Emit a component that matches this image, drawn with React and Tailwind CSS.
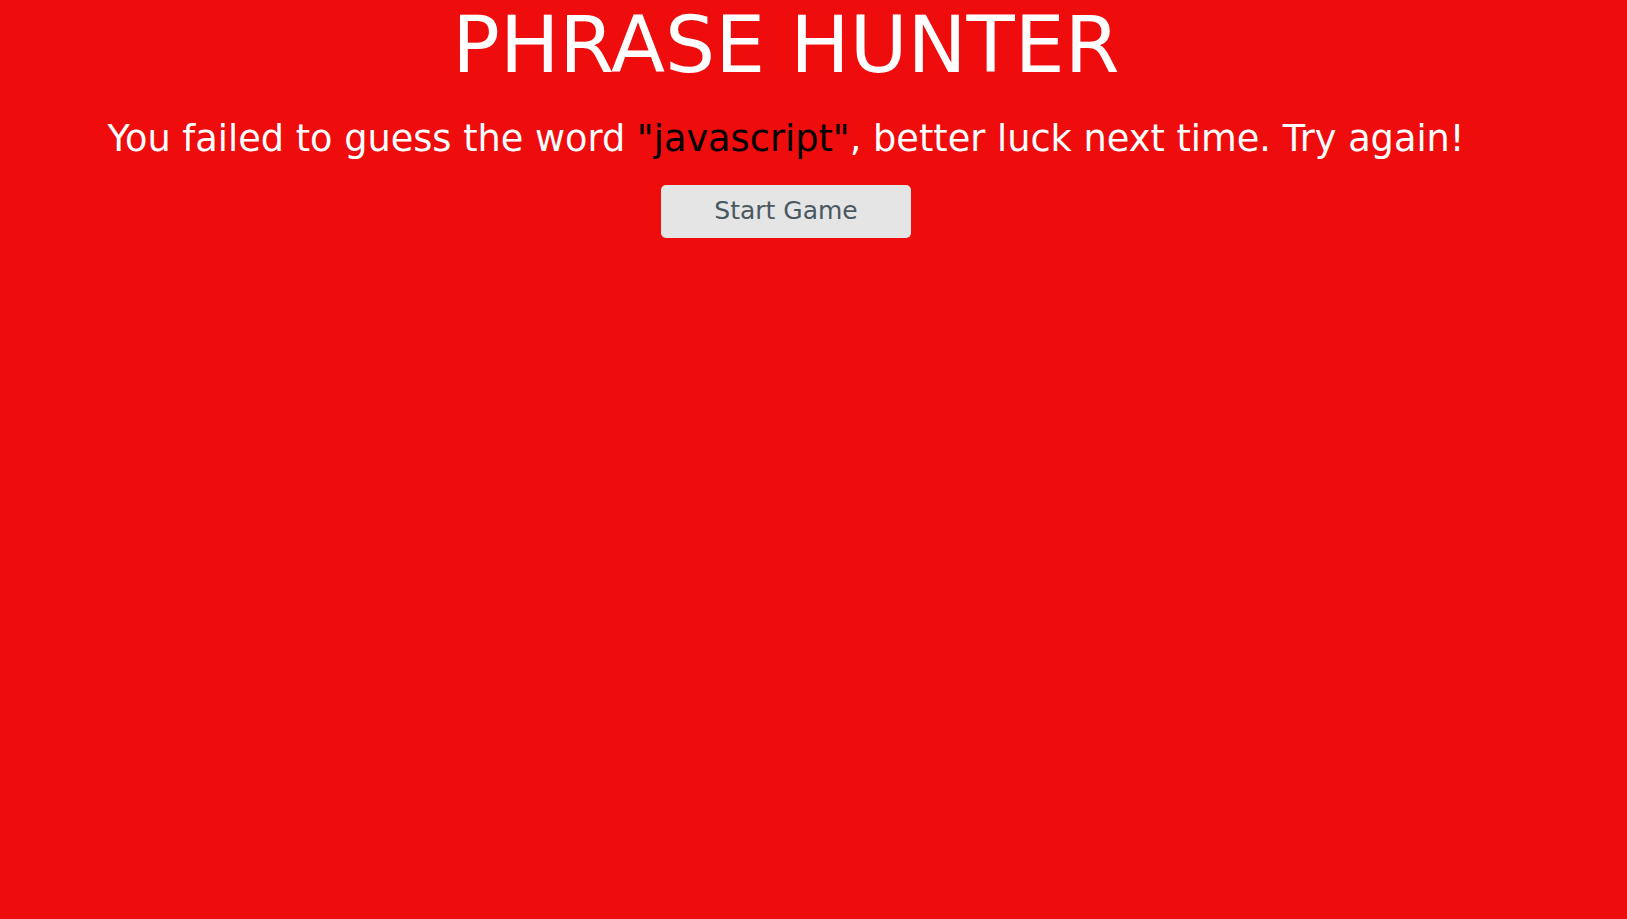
export default function App() {
  return (
    <div className="min-h-[919px] w-full bg-[#ef0c0c] pr-[55px]" style={{ fontFamily: '"DejaVu Sans", sans-serif' }}>
      <div className="flex flex-col items-center">
        <h1 className="text-white text-[79px] leading-none font-normal mt-[6px]">PHRASE HUNTER</h1>
        <h2 className="text-white text-[36.7px] leading-none font-normal mt-[36px] whitespace-nowrap">
          You failed to guess the word <span className="text-black">"javascript"</span>, better luck next time. Try again!
        </h2>
        <button className="mt-[27px] w-[250px] h-[53px] rounded-[5px] bg-[#e5e5e5] text-[#4a5861] text-[25px]">Start Game</button>
      </div>
    </div>
  );
}
